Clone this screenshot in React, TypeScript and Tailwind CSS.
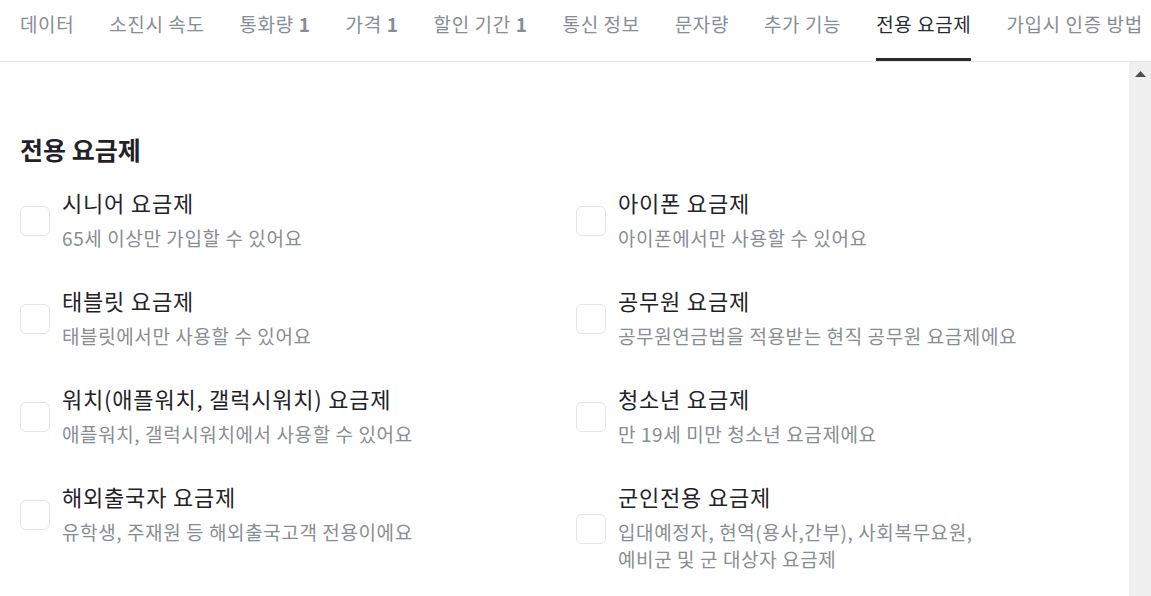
import React from "react";

const tabs: { label: string; count?: number; active?: boolean }[] = [
  { label: "데이터" },
  { label: "소진시 속도" },
  { label: "통화량", count: 1 },
  { label: "가격", count: 1 },
  { label: "할인 기간", count: 1 },
  { label: "통신 정보" },
  { label: "문자량" },
  { label: "추가 기능" },
  { label: "전용 요금제", active: true },
  { label: "가입시 인증 방법" },
];

const plans: { title: string; desc: string[] }[] = [
  { title: "시니어 요금제", desc: ["65세 이상만 가입할 수 있어요"] },
  { title: "아이폰 요금제", desc: ["아이폰에서만 사용할 수 있어요"] },
  { title: "태블릿 요금제", desc: ["태블릿에서만 사용할 수 있어요"] },
  { title: "공무원 요금제", desc: ["공무원연금법을 적용받는 현직 공무원 요금제에요"] },
  { title: "워치(애플워치, 갤럭시워치) 요금제", desc: ["애플워치, 갤럭시워치에서 사용할 수 있어요"] },
  { title: "청소년 요금제", desc: ["만 19세 미만 청소년 요금제에요"] },
  { title: "해외출국자 요금제", desc: ["유학생, 주재원 등 해외출국고객 전용이에요"] },
  {
    title: "군인전용 요금제",
    desc: ["입대예정자, 현역(용사,간부), 사회복무요원,", "예비군 및 군 대상자 요금제"],
  },
];

function PlanOption({ title, desc }: { title: string; desc: string[] }) {
  return (
    <label className="flex items-center gap-3 cursor-pointer">
      <span className="w-[30px] h-[30px] shrink-0 rounded-md border border-[#e2e4e7] bg-white" />
      <span className="flex flex-col">
        <span className="text-[22px] leading-[22px] tracking-[0.8px] mb-[11px] text-[#1f2329]">{title}</span>
        {desc.map((line) => (
          <span key={line} className="text-[19px] leading-[27px] tracking-[0.6px] text-[#878d94]">
            {line}
          </span>
        ))}
      </span>
    </label>
  );
}

export default function App() {
  return (
    <div
      className="w-[1151px] h-[596px] overflow-hidden bg-white flex flex-col"
      style={{ fontFamily: '"Noto Sans CJK KR", "Noto Sans", sans-serif' }}
    >
      {/* Tabs */}
      <nav className="h-[62px] shrink-0 border-b border-[#e5e5e5] flex gap-[35px] pl-5 whitespace-nowrap overflow-hidden">
        {tabs.map((t) => (
          <div
            key={t.label}
            className={`relative flex items-center h-full pb-[13px] text-[19px] tracking-[0.6px] ${
              t.active ? "text-[#272c33]" : "text-[#878d94]"
            }`}
          >
            <span>{t.label}</span>
            {t.count !== undefined && <span className="ml-[5px] font-bold">{t.count}</span>}
            {t.active && <span className="absolute left-0 right-0 bottom-0 h-[3px] bg-[#272c33]" />}
          </div>
        ))}
      </nav>

      {/* Body */}
      <div className="flex flex-1 min-h-0">
        <main className="flex-1 px-5 pt-[72px]">
          <h2 className="text-[25px] leading-[30px] font-bold text-[#1f2329] mb-[27px]">전용 요금제</h2>
          <div className="grid grid-cols-2 items-start gap-x-[23px] gap-y-[38px]">
            {plans.map((p) => (
              <PlanOption key={p.title} title={p.title} desc={p.desc} />
            ))}
          </div>
        </main>
        {/* Scrollbar */}
        <div className="w-[22px] shrink-0 bg-[#f0f0f0] flex justify-center pt-[9px]">
          <svg width="11" height="6" viewBox="0 0 11 6">
            <polygon points="5.5,0 11,6 0,6" fill="#505050" />
          </svg>
        </div>
      </div>
    </div>
  );
}
